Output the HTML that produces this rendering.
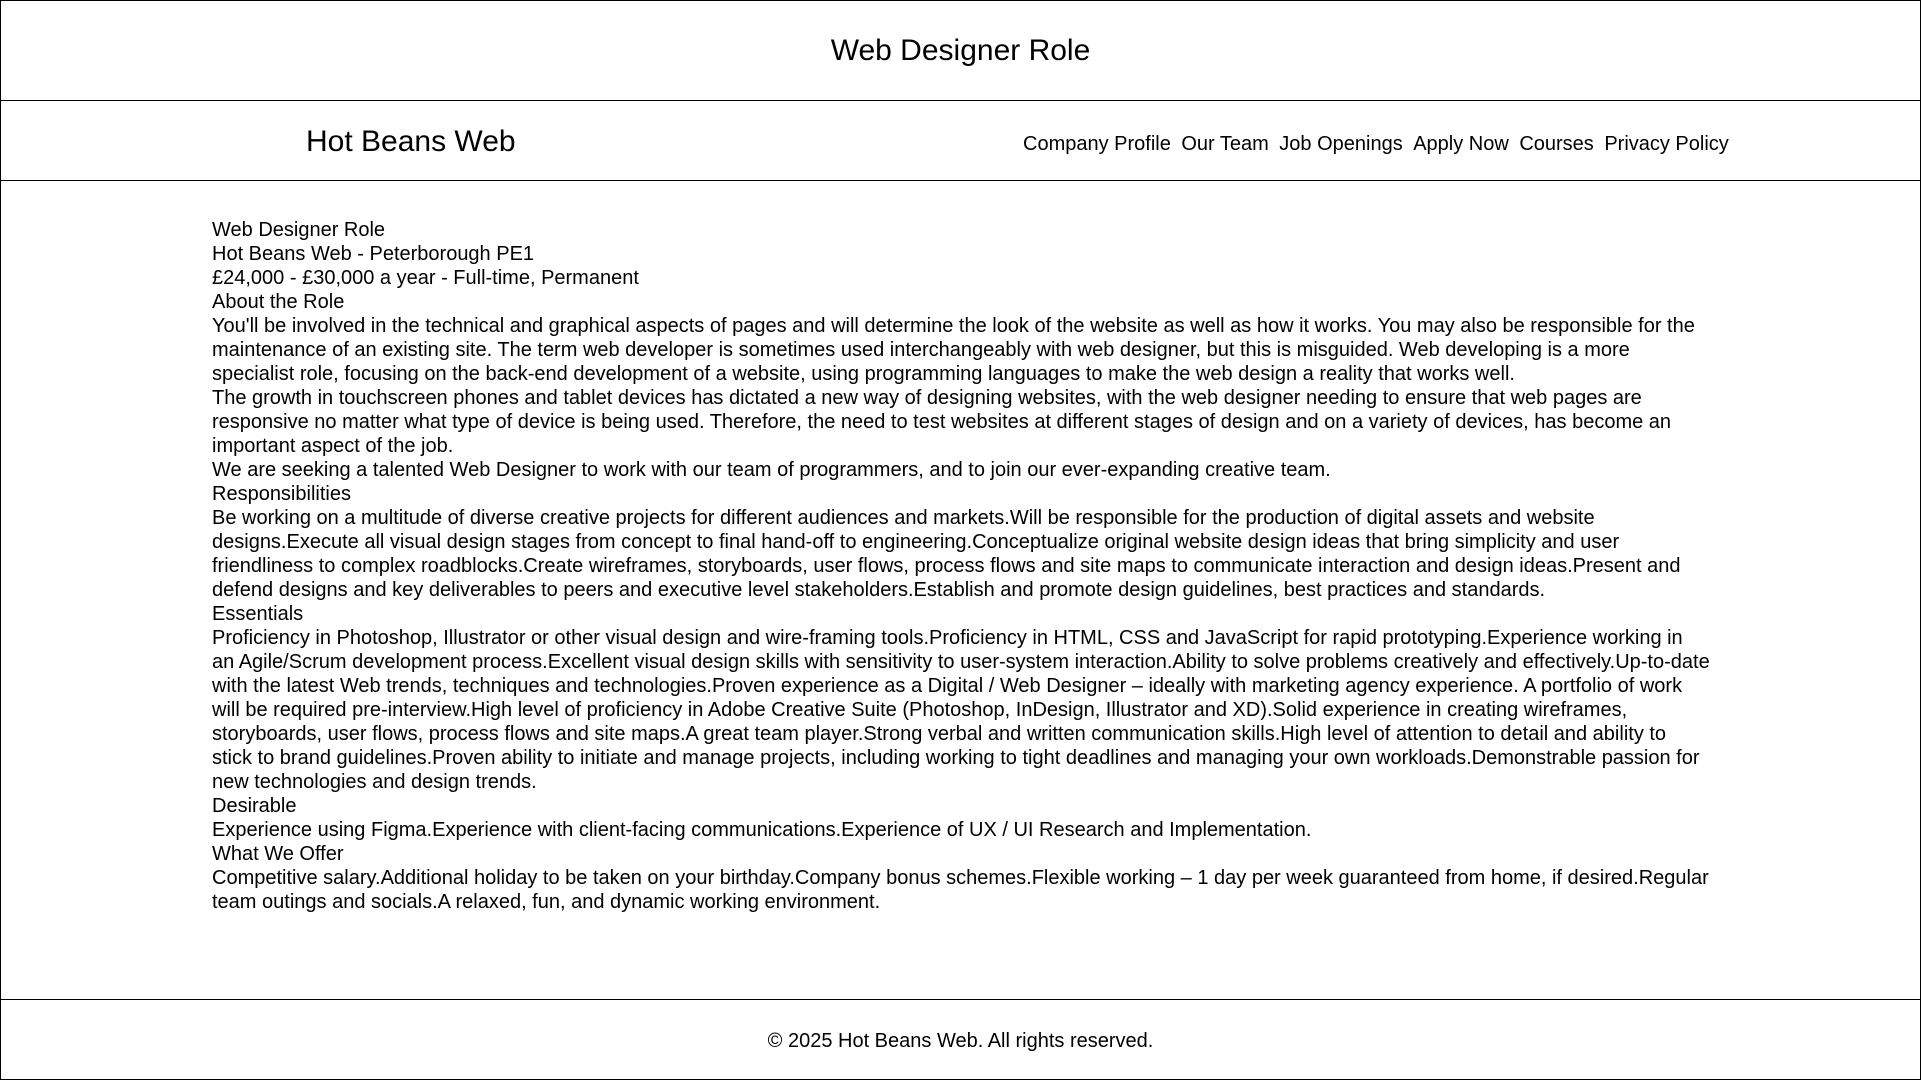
<!DOCTYPE html>
<html><head><meta charset="utf-8"><style>
html,body{margin:0;padding:0;background:#fff;}
body{width:1921px;height:1082px;position:relative;font-family:"Liberation Sans",Arial,sans-serif;color:#000;overflow:hidden;}
.box{position:absolute;left:0;width:1919px;border:1px solid #000;box-sizing:content-box;}
#h{top:0;height:99px;}
#h div{position:absolute;left:0;right:0;top:32px;text-align:center;font-size:30px;line-height:36px;}
#n{top:100px;height:79px;border-top:1px solid #000;}
#logo{position:absolute;left:305px;top:23px;font-size:30px;line-height:36px;}
#links{position:absolute;left:1022px;top:31px;font-size:20px;line-height:24px;white-space:nowrap;}
#links span{margin-right:10.5px;}
#c{position:absolute;left:212px;top:218px;width:1498px;font-size:20px;line-height:24px;}
#c p{margin:0;}
#f{top:999px;height:79px;}
#f div{position:absolute;left:0;right:0;top:29px;text-align:center;font-size:20px;line-height:24px;}
#side{position:absolute;left:0;top:180px;width:1919px;height:819px;border-left:1px solid #000;border-right:1px solid #000;}
</style></head><body>
<div class="box" id="h"><div>Web Designer Role</div></div>
<div class="box" id="n"><div id="logo">Hot Beans Web</div><div id="links"><span>Company Profile</span><span>Our Team</span><span>Job Openings</span><span>Apply Now</span><span>Courses</span><span>Privacy Policy</span></div></div>
<div id="side"></div>
<div id="c">
<p>Web Designer Role</p>
<p>Hot Beans Web - Peterborough PE1</p>
<p>£24,000 - £30,000 a year - Full-time, Permanent</p>
<p>About the Role</p>
<p>You'll be involved in the technical and graphical aspects of pages and will determine the look of the website as well as how it works. You may also be responsible for the maintenance of an existing site. The term web developer is sometimes used interchangeably with web designer, but this is misguided. Web developing is a more specialist role, focusing on the back-end development of a website, using programming languages to make the web design a reality that works well.</p>
<p>The growth in touchscreen phones and tablet devices has dictated a new way of designing websites, with the web designer needing to ensure that web pages are responsive no matter what type of device is being used. Therefore, the need to test websites at different stages of design and on a variety of devices, has become an important aspect of the job.</p>
<p>We are seeking a talented Web Designer to work with our team of programmers, and to join our ever-expanding creative team.</p>
<p>Responsibilities</p>
<p>Be working on a multitude of diverse creative projects for different audiences and markets.Will be responsible for the production of digital assets and website designs.Execute all visual design stages from concept to final hand-off to engineering.Conceptualize original website design ideas that bring simplicity and user friendliness to complex roadblocks.Create wireframes, storyboards, user flows, process flows and site maps to communicate interaction and design ideas.Present and defend designs and key deliverables to peers and executive level stakeholders.Establish and promote design guidelines, best practices and standards.</p>
<p>Essentials</p>
<p>Proficiency in Photoshop, Illustrator or other visual design and wire-framing tools.Proficiency in HTML, CSS and JavaScript for rapid prototyping.Experience working in an Agile/Scrum development process.Excellent visual design skills with sensitivity to user-system interaction.Ability to solve problems creatively and effectively.Up-to-date with the latest Web trends, techniques and technologies.Proven experience as a Digital / Web Designer – ideally with marketing agency experience. A portfolio of work will be required pre-interview.High level of proficiency in Adobe Creative Suite (Photoshop, InDesign, Illustrator and XD).Solid experience in creating wireframes, storyboards, user flows, process flows and site maps.A great team player.Strong verbal and written communication skills.High level of attention to detail and ability to stick to brand guidelines.Proven ability to initiate and manage projects, including working to tight deadlines and managing your own workloads.Demonstrable passion for new technologies and design trends.</p>
<p>Desirable</p>
<p>Experience using Figma.Experience with client-facing communications.Experience of UX / UI Research and Implementation.</p>
<p>What We Offer</p>
<p>Competitive salary.Additional holiday to be taken on your birthday.Company bonus schemes.Flexible working – 1 day per week guaranteed from home, if desired.Regular team outings and socials.A relaxed, fun, and dynamic working environment.</p>
</div>
<div class="box" id="f"><div>© 2025 Hot Beans Web. All rights reserved.</div></div>
</body></html>
